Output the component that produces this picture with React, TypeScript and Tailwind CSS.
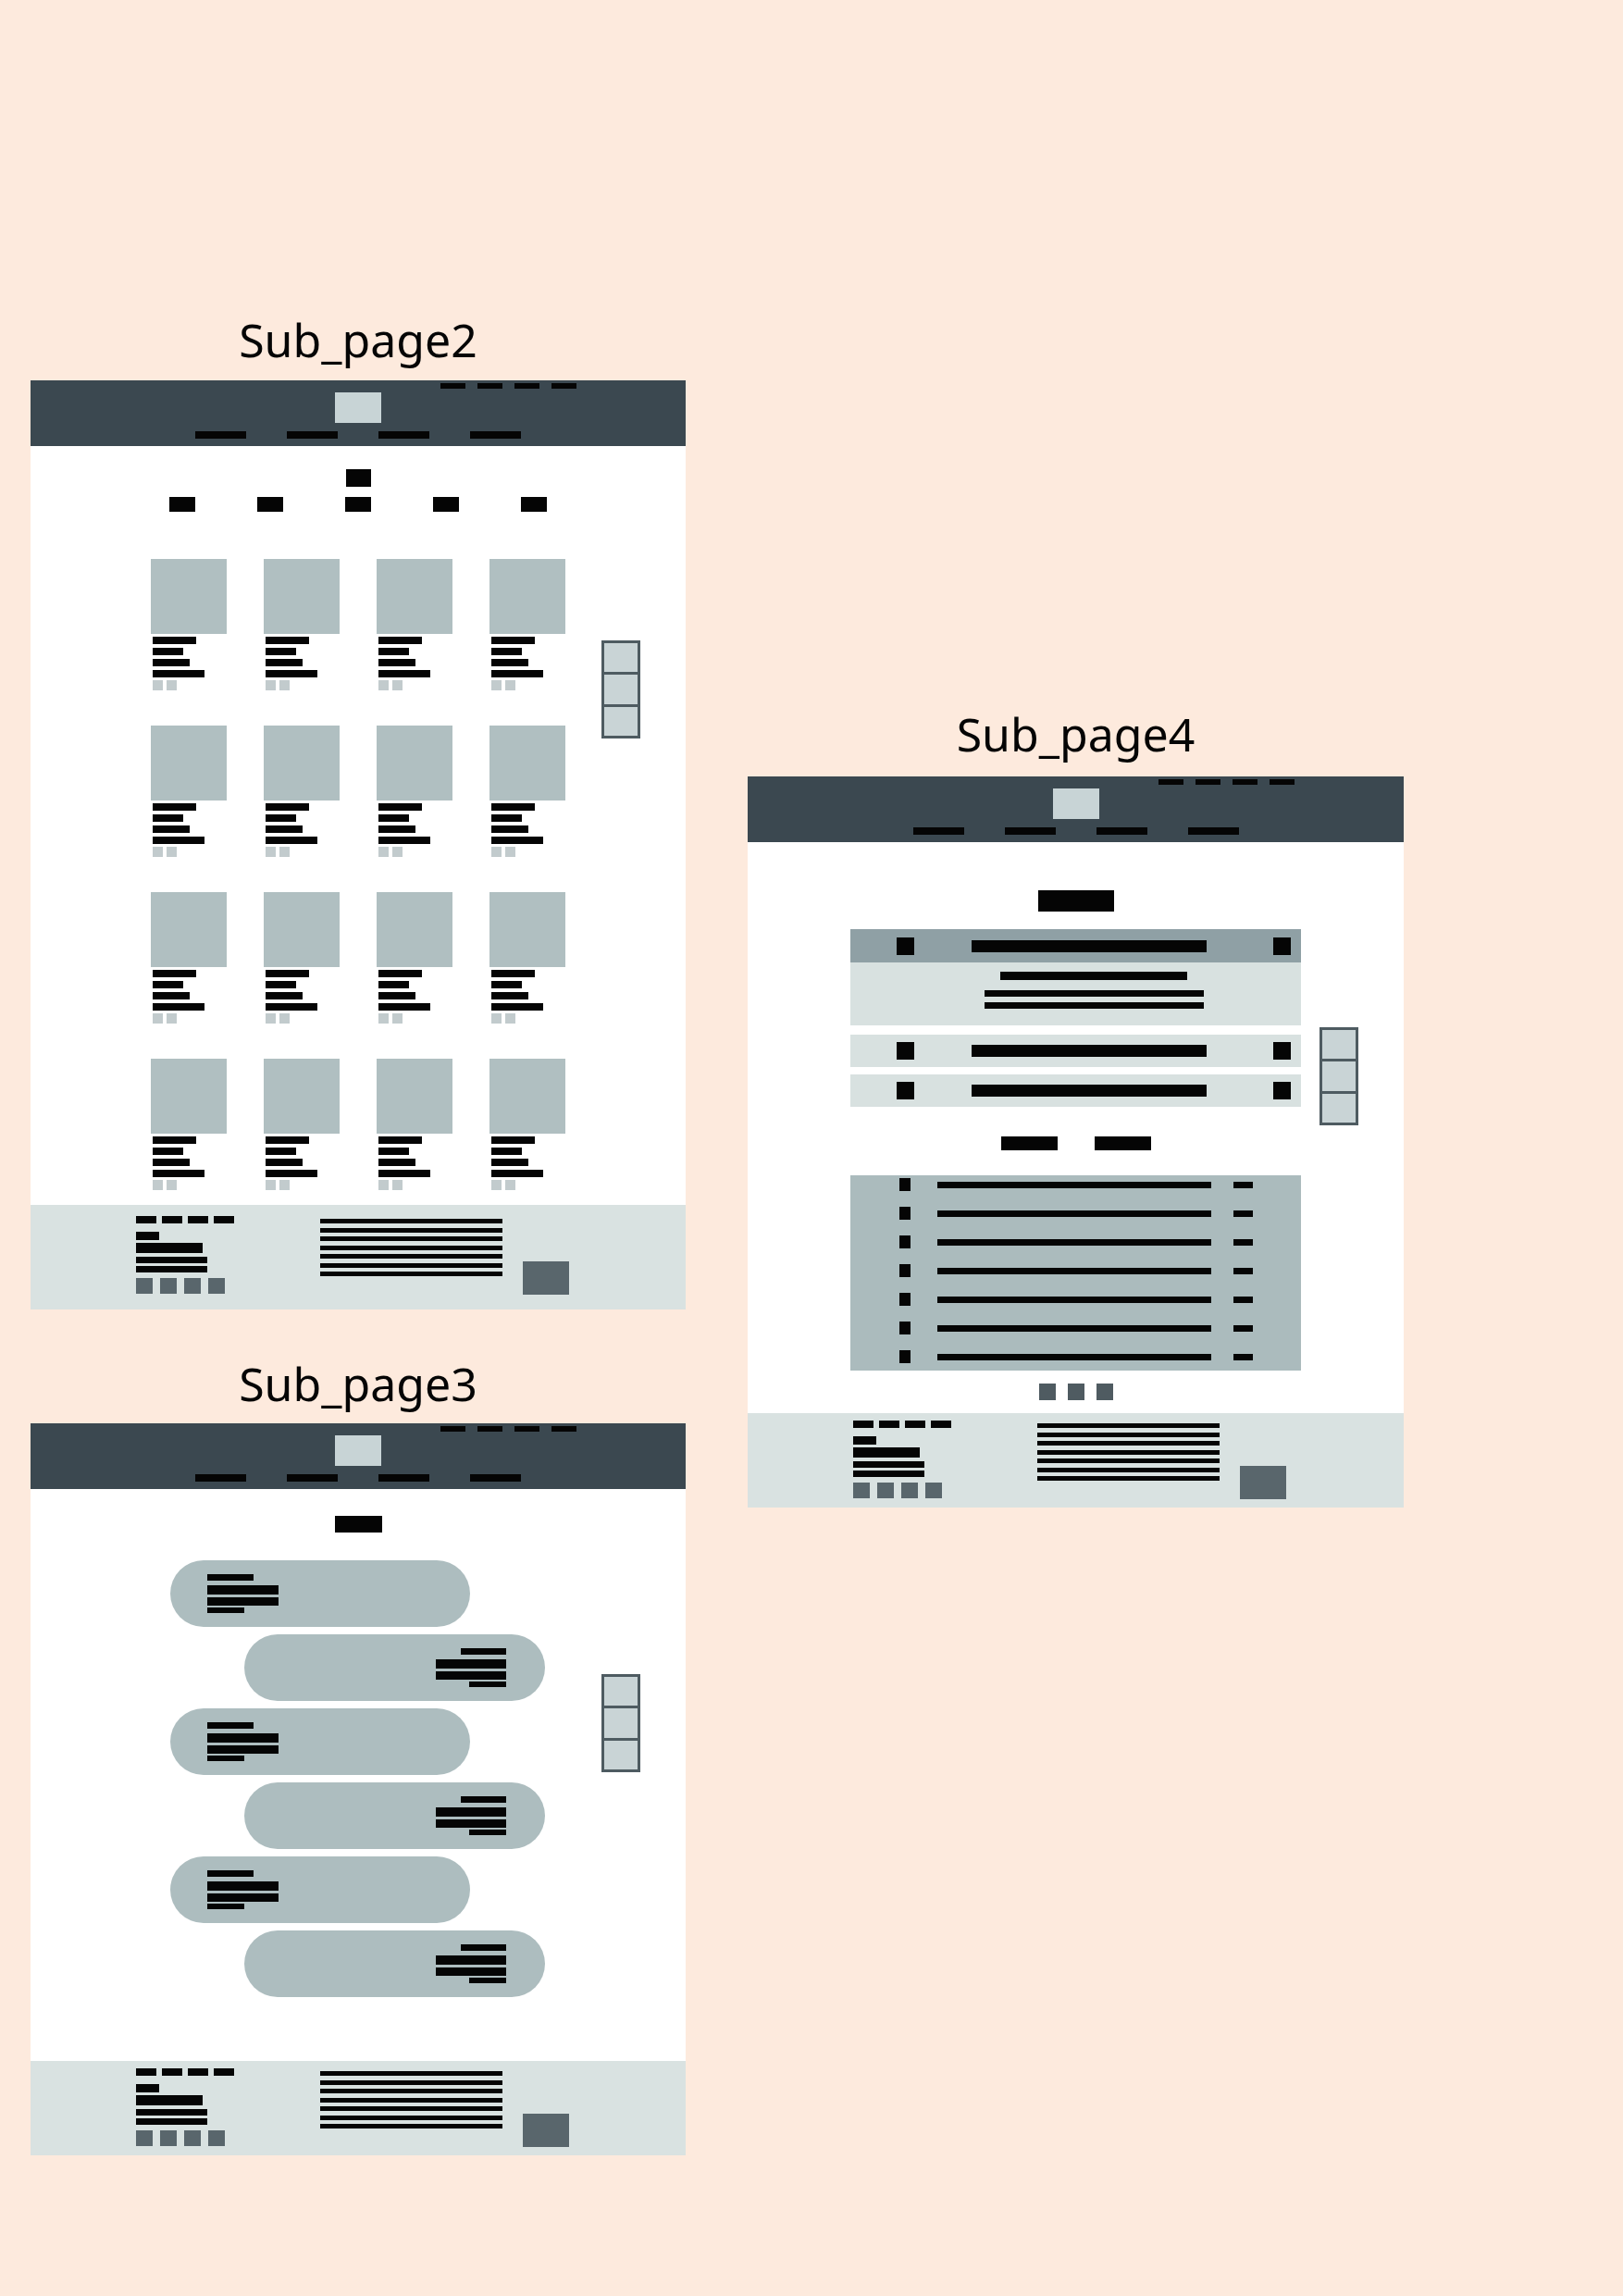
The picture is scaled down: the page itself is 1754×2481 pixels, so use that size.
const INK = "bg-[#050505]";

function Title({ text, className }: { text: string; className: string }) {
  return (
    <div
      className={`h-[52px] text-center text-[50px] leading-[52px] text-[#050505] font-['Noto_Sans',sans-serif] ${className}`}
    >
      {text}
    </div>
  );
}

function Header() {
  return (
    <div className="h-[71px] bg-[#3b4850] flex flex-col">
      <div className="flex justify-end gap-[13px] pr-[118px] pt-[3px]">
        {[0, 1, 2, 3].map((i) => (
          <div key={i} className={`w-[27px] h-[6px] ${INK}`} />
        ))}
      </div>
      <div className="mt-[4px] self-center w-[50px] h-[33px] bg-[#c8d4d6]" />
      <div className="mt-[9px] flex justify-center gap-[44px]">
        {[0, 1, 2, 3].map((i) => (
          <div key={i} className={`w-[55px] h-[8px] ${INK}`} />
        ))}
      </div>
    </div>
  );
}

function Footer({ tall }: { tall?: boolean }) {
  return (
    <div
      className={`bg-[#d9e2e1] flex items-start pl-[114px] ${
        tall ? "h-[113px] pt-[12px]" : "h-[102px] pt-[8px]"
      }`}
    >
      <div className="flex flex-col w-[106px]">
        <div className="flex gap-[6px]">
          {[0, 1, 2, 3].map((i) => (
            <div key={i} className={`w-[22px] h-[8px] ${INK}`} />
          ))}
        </div>
        <div className={`mt-[9px] w-[25px] h-[9px] ${INK}`} />
        <div className={`mt-[3px] w-[72px] h-[11px] ${INK}`} />
        <div className={`mt-[4px] w-[77px] h-[7px] ${INK}`} />
        <div className={`mt-[3px] w-[77px] h-[7px] ${INK}`} />
        <div className="mt-[6px] flex gap-[8px]">
          {[0, 1, 2, 3].map((i) => (
            <div key={i} className="w-[18px] h-[17px] bg-[#59666c]" />
          ))}
        </div>
      </div>
      <div className="ml-[93px] mt-[3px] flex flex-col gap-[4.5px]">
        {[0, 1, 2, 3, 4, 5, 6].map((i) => (
          <div key={i} className={`w-[197px] h-[5px] ${INK}`} />
        ))}
      </div>
      <div className="ml-[22px] mt-[49px] w-[50px] h-[36px] bg-[#59666c]" />
    </div>
  );
}

// floating side pager (three stacked cells)
function ScrollNav({ className }: { className: string }) {
  return (
    <div
      className={`absolute w-[42px] h-[106px] border-[3px] border-[#4e5b61] bg-[#c9d4d6] flex flex-col ${className}`}
    >
      <div className="flex-1" />
      <div className="flex-1 border-t-[3px] border-[#4e5b61]" />
      <div className="flex-1 border-t-[3px] border-[#4e5b61]" />
    </div>
  );
}

function Card() {
  return (
    <div className="w-[82px] flex flex-col">
      <div className="h-[81px] bg-[#b0bfc1]" />
      <div className="ml-[2px] mt-[3px] flex flex-col gap-[4px]">
        <div className={`w-[47px] h-[8px] ${INK}`} />
        <div className={`w-[33px] h-[8px] ${INK}`} />
        <div className={`w-[40px] h-[8px] ${INK}`} />
        <div className={`w-[56px] h-[8px] ${INK}`} />
      </div>
      <div className="ml-[2px] mt-[3px] flex gap-[4px]">
        <div className="w-[11px] h-[11px] bg-[#c2cbcd]" />
        <div className="w-[11px] h-[11px] bg-[#c2cbcd]" />
      </div>
    </div>
  );
}

function SubPage2() {
  return (
    <div className="flex flex-col">
      <Header />
      <div className="relative h-[820px] bg-white flex flex-col items-center">
        <div className={`mt-[25px] w-[27px] h-[19px] ${INK}`} />
        <div className="mt-[11px] flex gap-[67px]">
          {[0, 1, 2, 3, 4].map((i) => (
            <div key={i} className={`w-[28px] h-[16px] ${INK}`} />
          ))}
        </div>
        <div className="mt-[51px] grid grid-cols-4 gap-x-[40px] gap-y-[38px]">
          {Array.from({ length: 16 }).map((_, i) => (
            <Card key={i} />
          ))}
        </div>
        <ScrollNav className="left-[617px] top-[210px]" />
      </div>
      <Footer tall />
    </div>
  );
}

function Pill({ side }: { side: "left" | "right" }) {
  if (side === "left") {
    return (
      <div className="ml-[151px] w-[324px] h-[72px] rounded-full bg-[#adbdbf] flex flex-col justify-center items-start pl-[40px]">
        <div className={`w-[50px] h-[7px] ${INK}`} />
        <div className={`mt-[5px] w-[77px] h-[10px] ${INK}`} />
        <div className={`mt-[3px] w-[77px] h-[9px] ${INK}`} />
        <div className={`mt-[2px] w-[40px] h-[6px] ${INK}`} />
      </div>
    );
  }
  return (
    <div className="ml-[231px] w-[325px] h-[72px] rounded-full bg-[#adbdbf] flex flex-col justify-center items-end pr-[42px]">
      <div className={`w-[49px] h-[7px] ${INK}`} />
      <div className={`mt-[5px] w-[76px] h-[10px] ${INK}`} />
      <div className={`mt-[3px] w-[76px] h-[9px] ${INK}`} />
      <div className={`mt-[2px] w-[40px] h-[6px] ${INK}`} />
    </div>
  );
}

function SubPage3() {
  const sides: ("left" | "right")[] = ["left", "right", "left", "right", "left", "right"];
  return (
    <div className="flex flex-col">
      <Header />
      <div className="relative h-[618px] bg-white flex flex-col">
        <div className={`mt-[29px] self-center w-[51px] h-[18px] ${INK}`} />
        <div className="mt-[30px] flex flex-col gap-[8px]">
          {sides.map((s, i) => (
            <Pill key={i} side={s} />
          ))}
        </div>
        <ScrollNav className="left-[617px] top-[200px]" />
      </div>
      <Footer />
    </div>
  );
}

function AccordionRow({ head, className }: { head?: boolean; className?: string }) {
  return (
    <div
      className={`flex items-center pl-[50px] ${
        head ? "h-[36px] bg-[#8fa0a5]" : "h-[35px] bg-[#d8e1e0]"
      } ${className ?? ""}`}
    >
      <div className={`w-[19px] h-[19px] ${INK}`} />
      <div className={`ml-[62px] w-[254px] h-[13px] ${INK}`} />
      <div className={`ml-[72px] w-[19px] h-[19px] ${INK}`} />
    </div>
  );
}

function SubPage4() {
  return (
    <div className="flex flex-col">
      <Header />
      <div className="relative h-[617px] bg-white flex flex-col items-center">
        <div className={`mt-[52px] w-[82px] h-[23px] ${INK}`} />
        <div className="mt-[19px] w-[487px] flex flex-col">
          <AccordionRow head />
          <div className="h-[68px] bg-[#d8e1e0] flex flex-col items-center pl-[39px] pt-[10px]">
            <div className={`w-[202px] h-[9px] ${INK}`} />
            <div className={`mt-[11px] w-[237px] h-[7px] ${INK}`} />
            <div className={`mt-[6px] w-[237px] h-[7px] ${INK}`} />
          </div>
          <AccordionRow className="mt-[10px]" />
          <AccordionRow className="mt-[8px]" />
        </div>
        <div className="mt-[32px] flex gap-[40px]">
          <div className={`w-[61px] h-[15px] ${INK}`} />
          <div className={`w-[61px] h-[15px] ${INK}`} />
        </div>
        <div className="mt-[27px] w-[487px] bg-[#abbbbd] flex flex-col gap-[11px] pb-[5px]">
          {[0, 1, 2, 3, 4, 5, 6].map((i) => (
            <div key={i} className="h-[20px] flex items-center">
              <div className={`ml-[53px] w-[12px] h-[14px] ${INK}`} />
              <div className={`ml-[29px] w-[296px] h-[7px] ${INK}`} />
              <div className={`ml-[24px] w-[21px] h-[7px] ${INK}`} />
            </div>
          ))}
        </div>
        <div className="mt-[14px] flex gap-[13px]">
          {[0, 1, 2].map((i) => (
            <div key={i} className="w-[18px] h-[18px] bg-[#4f5b61]" />
          ))}
        </div>
        <ScrollNav className="left-[618px] top-[200px]" />
      </div>
      <Footer />
    </div>
  );
}

export default function App() {
  return (
    <div className="w-[1754px] h-[2481px] bg-[#fdeadd] flex gap-[67px] pl-[33px]">
      <div className="w-[708px] pt-[341px] flex flex-col">
        <Title text="Sub_page2" className="mb-[18px]" />
        <SubPage2 />
        <Title text="Sub_page3" className="mt-[54px] mb-[17px]" />
        <SubPage3 />
      </div>
      <div className="w-[709px] pt-[767px] flex flex-col">
        <Title text="Sub_page4" className="mb-[20px]" />
        <SubPage4 />
      </div>
    </div>
  );
}
